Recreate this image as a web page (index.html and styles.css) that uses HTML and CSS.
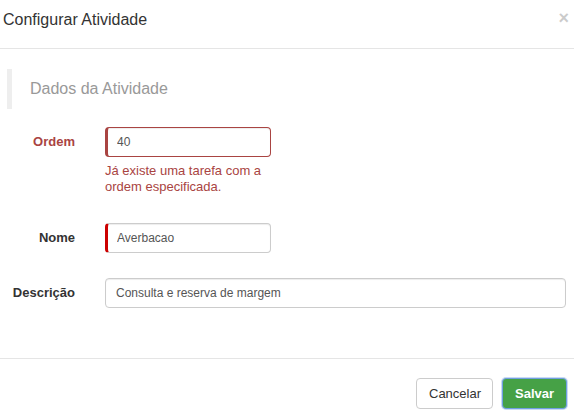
FILE: index.html
```html
<!DOCTYPE html>
<html lang="pt">
<head>
<meta charset="utf-8">
<title>Configurar Atividade</title>
<link rel="stylesheet" href="styles.css">
</head>
<body>
<div class="modal">
  <header class="modal-header">
    <h4 class="modal-title">Configurar Atividade</h4>
    <button class="close" type="button">×</button>
  </header>
  <div class="modal-body">
    <div class="section-title">Dados da Atividade</div>
    <div class="form">
      <div class="row row-ordem has-error">
        <label class="label">Ordem</label>
        <div class="field field-short">
          <input class="input input-error" type="text" value="40">
          <span class="help">Já existe uma tarefa com a ordem especificada.</span>
        </div>
      </div>
      <div class="row row-nome">
        <label class="label">Nome</label>
        <div class="field field-short">
          <input class="input input-required" type="text" value="Averbacao">
        </div>
      </div>
      <div class="row row-desc">
        <label class="label">Descrição</label>
        <div class="field">
          <input class="input" type="text" value="Consulta e reserva de margem">
        </div>
      </div>
    </div>
  </div>
  <footer class="modal-footer">
    <button class="btn btn-default" type="button">Cancelar</button>
    <button class="btn btn-success" type="button">Salvar</button>
  </footer>
</div>
</body>
</html>
```
FILE: styles.css
```css
* { box-sizing: border-box; }
html, body {
  margin: 0;
  padding: 0;
  background: #fff;
  font-family: "Liberation Sans", Arial, sans-serif;
  color: #333;
}
.modal {
  width: 574px;
  height: 419px;
  background: #fff;
}
.modal-header {
  height: 49px;
  border-bottom: 1px solid #e5e5e5;
  display: flex;
  justify-content: space-between;
  align-items: flex-start;
  padding: 10px 5px 0 3px;
}
.modal-title {
  margin: 0;
  font-size: 16px;
  line-height: 20px;
  font-weight: normal;
  color: #333;
}
.close {
  border: 0;
  background: transparent;
  padding: 0;
  margin-top: 0;
  font-family: "Liberation Sans", Arial, sans-serif;
  font-size: 18px;
  font-weight: bold;
  line-height: 16px;
  color: #000;
  opacity: 0.2;
}
.modal-body {
  padding: 20px 0 0 7px;
  height: 309px;
}
.section-title {
  height: 40px;
  line-height: 40px;
  border-left: 5px solid #eee;
  padding-left: 18px;
  font-size: 16px;
  color: #999;
}
.form {
  display: flex;
  flex-direction: column;
  margin-left: -7px;
}
.row {
  display: grid;
  grid-template-columns: 75px 1fr;
  column-gap: 30px;
  align-items: start;
}
.row-ordem { margin-top: 18px; }
.row-nome { margin-top: 28px; }
.row-desc { margin-top: 25px; }
.label {
  text-align: right;
  font-size: 13px;
  font-weight: bold;
  line-height: 30px;
  color: #333;
}
.has-error .label { color: #a94442; }
.field {
  display: flex;
  flex-direction: column;
  padding-right: 8px;
}
.field-short { width: 174px; }
.input {
  width: 100%;
  height: 30px;
  border: 1px solid #ccc;
  border-radius: 4px;
  padding: 0 10px;
  font-family: "Liberation Sans", Arial, sans-serif;
  font-size: 12px;
  color: #555;
  background: #fff;
  box-shadow: inset 0 1px 1px rgba(0,0,0,0.075);
  outline: none;
}
.input-error {
  border-color: #a94442;
  border-left-width: 3px;
  padding-left: 9px;
}
.input-required {
  border-left: 3px solid #cc0000;
  padding-left: 9px;
}
.help {
  margin-top: 6px;
  font-size: 13px;
  line-height: 16px;
  color: #a94442;
}
.modal-footer {
  border-top: 1px solid #e5e5e5;
  padding: 19px 7px 0 0;
  display: flex;
  justify-content: flex-end;
  gap: 9px;
}
.btn {
  height: 31px;
  border-radius: 4px;
  font-family: "Liberation Sans", Arial, sans-serif;
  font-size: 13px;
  padding: 0 12px;
  border: 1px solid #ccc;
  background: #fff;
  color: #333;
}
.btn-default { width: 77px; }
.btn-success {
  width: 65px;
  background: #46a146;
  border-color: #6f9fe0;
  color: #fff;
  font-weight: bold;
  box-shadow: 0 0 0 1px rgba(100,150,220,0.35);
}
```
